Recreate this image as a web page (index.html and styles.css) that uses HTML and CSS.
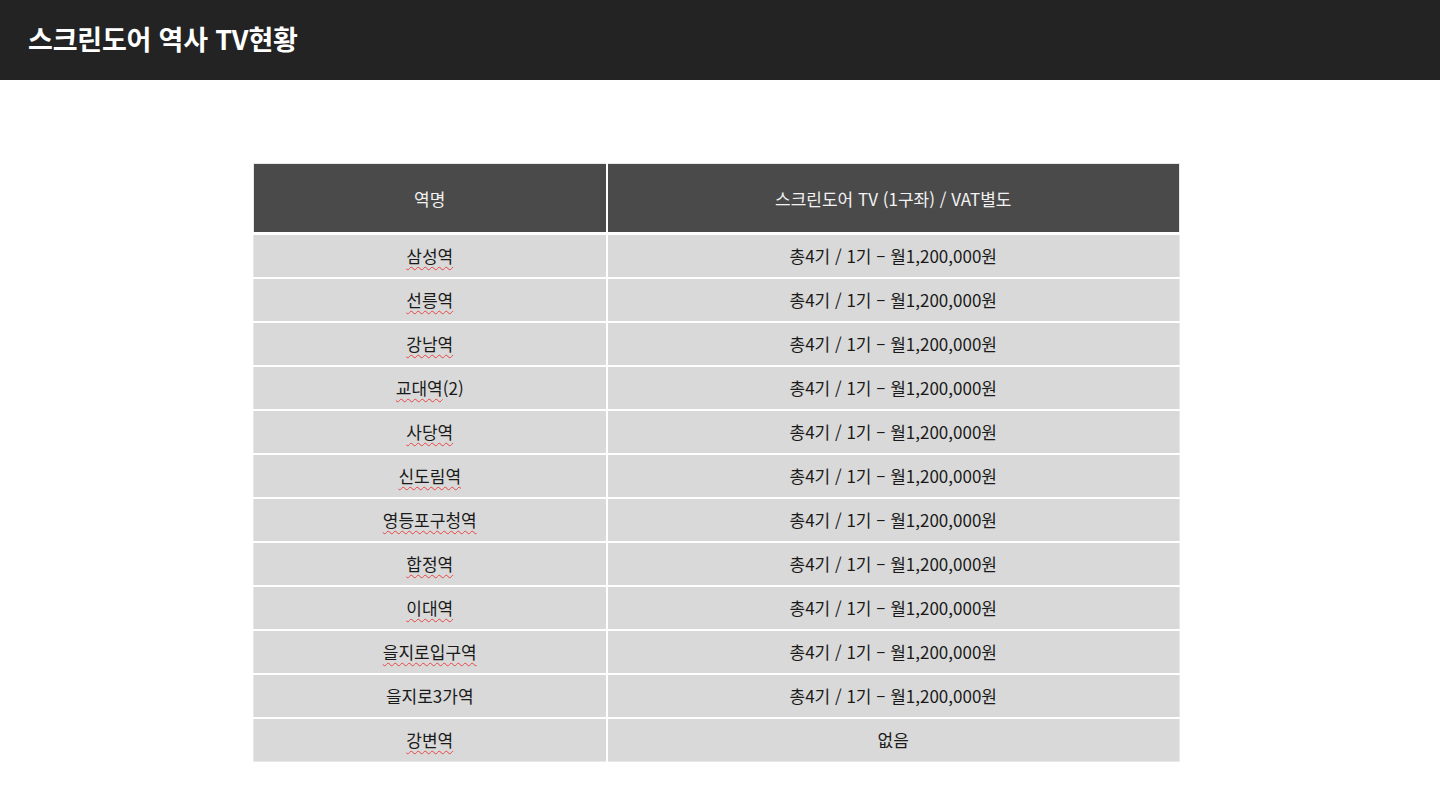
FILE: index.html
```html
<!DOCTYPE html>
<html lang="ko">
<head>
    <meta charset="UTF-8">
    <meta name="viewport" content="width=device-width, initial-scale=1.0">
    <title>스크린도어 역사 TV현황</title>
    <link rel="stylesheet" href="styles.css">
</head>
<body>
    <header class="topbar">
        <h1>스크린도어 역사 TV현황</h1>
    </header>

    <main>
        <table class="tv-table">
            <thead>
                <tr>
                    <th class="col-name">역명</th>
                    <th>스크린도어 TV (1구좌) / VAT별도</th>
                </tr>
            </thead>
            <tbody>
                <tr><td><span class="typo">삼성역</span></td><td>총4기 / 1기 – 월1,200,000원</td></tr>
                <tr><td><span class="typo">선릉역</span></td><td>총4기 / 1기 – 월1,200,000원</td></tr>
                <tr><td><span class="typo">강남역</span></td><td>총4기 / 1기 – 월1,200,000원</td></tr>
                <tr><td><span class="typo">교대역</span>(2)</td><td>총4기 / 1기 – 월1,200,000원</td></tr>
                <tr><td><span class="typo">사당역</span></td><td>총4기 / 1기 – 월1,200,000원</td></tr>
                <tr><td><span class="typo">신도림역</span></td><td>총4기 / 1기 – 월1,200,000원</td></tr>
                <tr><td><span class="typo">영등포구청역</span></td><td>총4기 / 1기 – 월1,200,000원</td></tr>
                <tr><td><span class="typo">합정역</span></td><td>총4기 / 1기 – 월1,200,000원</td></tr>
                <tr><td><span class="typo">이대역</span></td><td>총4기 / 1기 – 월1,200,000원</td></tr>
                <tr><td><span class="typo">을지로입구역</span></td><td>총4기 / 1기 – 월1,200,000원</td></tr>
                <tr><td>을지로3가역</td><td>총4기 / 1기 – 월1,200,000원</td></tr>
                <tr><td><span class="typo">강변역</span></td><td>없음</td></tr>
            </tbody>
        </table>
    </main>
</body>
</html>
```

FILE: styles.css
```css
:root {
--bar: #232323;
--head: #4a4a4a;
--cell: #d9d9d9;
--line: #ffffff;
--text: #1a1a1a;
}

*,
*::before,
*::after {
box-sizing: border-box;
}

body {
font-family: "Noto Sans CJK KR", "Noto Sans", sans-serif;
background-color: #ffffff;
color: var(--text);
margin: 0;
}

.topbar {
background-color: var(--bar);
height: 80px;
display: flex;
align-items: center;
padding-left: 28px;
}

.topbar h1 {
margin: 0 0 3px;
color: #ffffff;
font-size: 27px;
line-height: 1;
font-weight: 700;
letter-spacing: -0.2px;
}

main {
padding: 83px 0 0 253px;
}

.tv-table {
width: 927px;
border-collapse: collapse;
border: 1px solid #e8e8e8;
font-size: 17px;
}

.tv-table th {
background-color: var(--head);
color: #f2f2f2;
font-weight: 400;
height: 70px;
border-left: 2px solid var(--line);
border-bottom: 3px solid var(--line);
}

.tv-table th.col-name {
width: 353px;
border-left: none;
}

.tv-table td {
background-color: var(--cell);
text-align: center;
height: 44px;
padding: 0;
border-left: 2px solid var(--line);
border-top: 2px solid var(--line);
}

.tv-table td:first-child {
border-left: none;
}

.tv-table tbody tr:first-child td {
border-top: none;
}

.typo {
text-decoration: underline wavy #e84545;
text-decoration-thickness: 1px;
text-underline-offset: 3px;
text-decoration-skip-ink: none;
}
```
